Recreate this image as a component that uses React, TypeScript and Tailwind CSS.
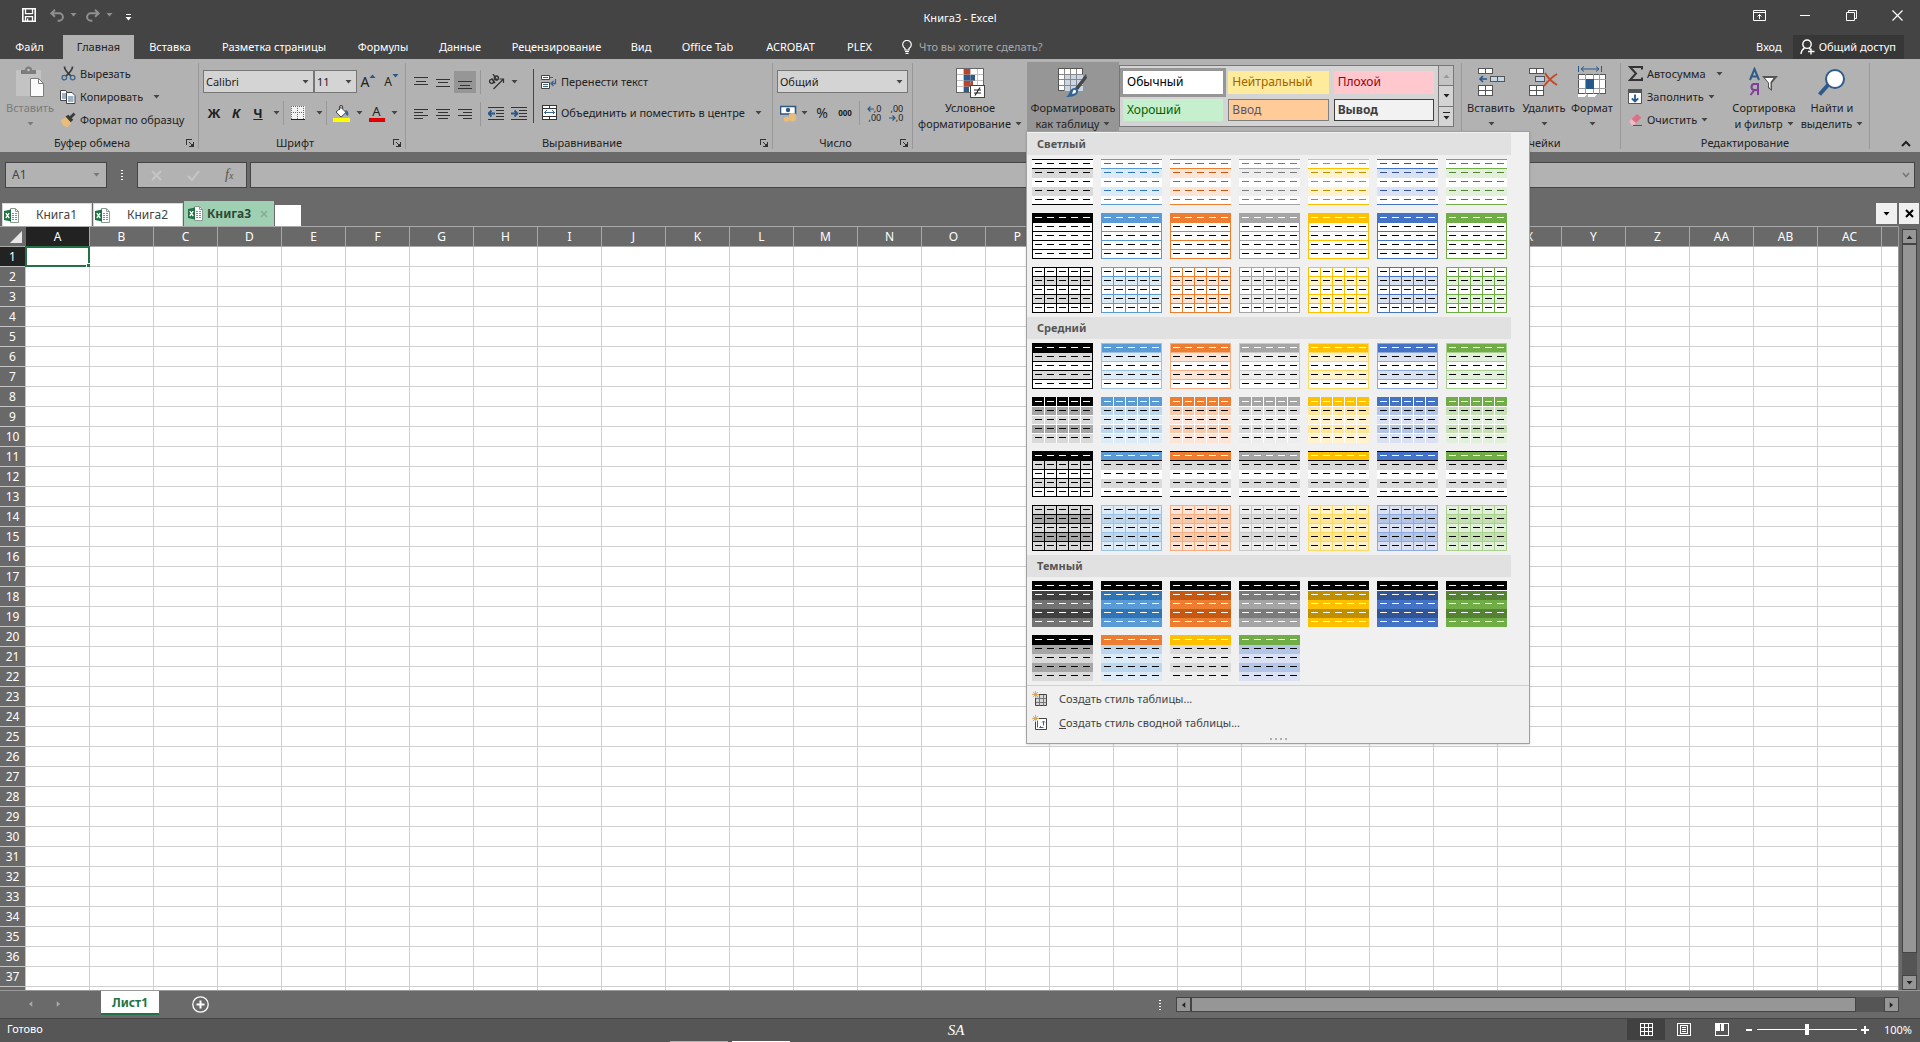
import { useState } from 'react';
import type { ReactNode } from 'react';

const columns = 'A B C D E F G H I J K L M N O P Q R S T U V W X Y Z AA AB AC'.split(' ');
const rows = Array.from({ length: 37 }, (_, i) => i + 1);

const tabs = [
  { name: 'Главная', width: 'w-[71px]' },
  { name: 'Вставка', width: 'w-[72px]' },
  { name: 'Разметка страницы', width: 'w-[136px]' },
  { name: 'Формулы', width: 'w-[82px]' },
  { name: 'Данные', width: 'w-[72px]' },
  { name: 'Рецензирование', width: 'w-[121px]' },
  { name: 'Вид', width: 'w-[48px]' },
  { name: 'Office Tab', width: 'w-[85px]' },
  { name: 'ACROBAT', width: 'w-[81px]' },
  { name: 'PLEX', width: 'w-[57px]' },
];

// main colour, its 20/40/60% tints, dark shade and the ink used for dashes
type Theme = { c: string; t20: string; t40: string; t60: string; dark: string; ink: string };

const themes: Theme[] = [
  { c: '#000000', t20: '#d9d9d9', t40: '#a6a6a6', t60: '#000000', dark: '#404040', ink: '#000000' },
  { c: '#5b9bd5', t20: '#ddebf7', t40: '#bdd7ee', t60: '#9bc2e6', dark: '#2f75b5', ink: '#2f75b5' },
  { c: '#ed7d31', t20: '#fce4d6', t40: '#f8cbad', t60: '#f4b084', dark: '#c65911', ink: '#c65911' },
  { c: '#a5a5a5', t20: '#ededed', t40: '#dbdbdb', t60: '#c9c9c9', dark: '#7b7b7b', ink: '#7b7b7b' },
  { c: '#ffc000', t20: '#fff2cc', t40: '#ffe699', t60: '#ffd966', dark: '#bf8f00', ink: '#bf8f00' },
  { c: '#4472c4', t20: '#d9e1f2', t40: '#b4c6e7', t60: '#8ea9db', dark: '#305496', ink: '#305496' },
  { c: '#70ad47', t20: '#e2efda', t40: '#c6e0b4', t60: '#a9d08e', dark: '#548235', ink: '#548235' },
];

type Tile = {
  head: string;
  odd: string;
  even: string;
  headDash: string;
  dash: string;
  hLines?: number[];
  hColor?: string;
  grid?: string;
  box?: string;
};

const inner = [9, 18, 27, 36];

const light1 = (t: Theme): Tile => ({
  head: '#fff', odd: t.t20, even: '#fff', headDash: t.ink, dash: t.ink, hLines: [0, 9, 45], hColor: t.c,
});
const light2 = (t: Theme): Tile => ({
  head: t.c, odd: '#fff', even: '#fff', headDash: '#fff', dash: '#000', hLines: inner, hColor: t.c, box: t.c,
});
const light3 = (t: Theme): Tile => ({
  head: '#fff', odd: t.t20, even: '#fff', headDash: '#000', dash: '#000', hLines: inner, hColor: t.c, grid: t.c, box: t.c,
});
const medium1 = (t: Theme): Tile => ({
  head: t.c, odd: t.t20, even: '#fff', headDash: '#fff', dash: '#000', hLines: inner, hColor: t.t60, box: t.t60,
});
const medium2 = (t: Theme): Tile => ({
  head: t.c, odd: t.t40, even: t.t20, headDash: '#fff', dash: '#000', hLines: inner, hColor: '#fff', grid: '#fff',
});
const medium3 = (t: Theme, i: number): Tile =>
  i === 0
    ? { head: '#000', odd: t.t20, even: '#fff', headDash: '#fff', dash: '#000', hLines: inner, hColor: '#000', grid: '#000', box: '#000' }
    : { head: t.c, odd: '#d9d9d9', even: '#fff', headDash: '#fff', dash: '#000', hLines: [0, 9, 45], hColor: '#000' };
const medium4 = (t: Theme): Tile => ({
  head: t.t20, odd: t.t40, even: t.t20, headDash: '#000', dash: '#000', hLines: inner, hColor: t.t60, grid: t.t60, box: t.t60,
});
const dark1 = (t: Theme, i: number): Tile => ({
  head: '#000', odd: t.dark, even: i === 0 ? '#737373' : t.c, headDash: '#fff', dash: '#fff', hLines: [9], hColor: '#fff',
});
const dark2 = (head: string, t: Theme): Tile => ({
  head, odd: t.t40, even: t.t20, headDash: '#fff', dash: '#000',
});

const sections: { title: string; rows: Tile[][] }[] = [
  { title: 'Светлый', rows: [themes.map(light1), themes.map(light2), themes.map(light3)] },
  { title: 'Средний', rows: [themes.map(medium1), themes.map(medium2), themes.map(medium3), themes.map(medium4)] },
  {
    title: 'Темный',
    rows: [
      themes.map(dark1),
      [
        dark2('#000000', themes[0]),
        dark2('#ed7d31', themes[1]),
        dark2('#ffc000', themes[3]),
        dark2('#70ad47', themes[5]),
      ],
    ],
  },
];

const TilePreview = ({ tile }: { tile: Tile }) => (
  <svg width="61" height="46" shapeRendering="crispEdges" className="block">
    <rect width="61" height="10" fill={tile.head} />
    {[0, 1, 2, 3].map((i) => (
      <rect key={i} y={10 + i * 9} width="61" height="9" fill={i % 2 ? tile.even : tile.odd} />
    ))}
    {tile.hLines?.map((y) => <rect key={y} y={y} width="61" height="1" fill={tile.hColor} />)}
    {tile.grid &&
      [12, 24, 36, 48].map((x) => <rect key={x} x={x} width="1" height="46" fill={tile.grid} />)}
    {tile.box && <rect x="0.5" y="0.5" width="60" height="45" fill="none" stroke={tile.box} />}
    {[0, 1, 2, 3, 4].map((r) =>
      [0, 1, 2, 3, 4].map((c) => (
        <rect
          key={`${r}-${c}`}
          x={3 + c * 12}
          y={4 + r * 9}
          width="7"
          height="1"
          fill={r === 0 ? tile.headDash : tile.dash}
        />
      )),
    )}
  </svg>
);

const Arrow = ({ className = 'text-[#444]' }: { className?: string }) => (
  <svg width="7" height="4" viewBox="0 0 7 4" className={`shrink-0 ${className}`}>
    <path d="M0.5 0h6L3.5 3.6z" fill="currentColor" />
  </svg>
);

const Launcher = () => (
  <button aria-label="Параметры группы" className="flex h-3 w-3 items-center justify-center">
    <svg width="8" height="8" viewBox="0 0 8 8" fill="none" stroke="#333" shapeRendering="crispEdges">
      <path d="M0.5 6V0.5H6M3 3l3 3M7.5 3v4.5H3" />
      <path d="M7 4v3H4z" fill="#333" stroke="none" />
    </svg>
  </button>
);

const Divider = ({ className = 'h-6 bg-[#989898]' }: { className?: string }) => (
  <span className={`w-px shrink-0 ${className}`} />
);

type GroupProps = { label?: string; width: string; launcher?: boolean; children: ReactNode };

const Group = ({ label, width, launcher, children }: GroupProps) => (
  <section className={`flex shrink-0 flex-col ${width}`}>
    <div className="flex h-[76px] items-start">{children}</div>
    <div className="flex h-4 items-center">
      <span className="flex-1 text-center">{label}</span>
      {launcher && (
        <span className="pr-0.5">
          <Launcher />
        </span>
      )}
    </div>
  </section>
);

const GroupLine = () => <span className="mt-1 h-[86px] w-px shrink-0 bg-[#989898]" />;

type SmallProps = { icon: ReactNode; text: string; arrow?: boolean; gap?: string };

const SmallButton = ({ icon, text, arrow, gap = 'gap-2' }: SmallProps) => (
  <button className={`flex h-[23px] items-center whitespace-nowrap ${gap}`}>
    <span className="flex items-center gap-1">
      <span className="flex h-4 w-4 shrink-0 items-center justify-center">{icon}</span>
      {text}
    </span>
    {arrow && <Arrow />}
  </button>
);

type BigProps = { icon: ReactNode; lines: string[]; width: string; dim?: boolean; active?: boolean };

const BigButton = ({ icon, lines, width, dim, active }: BigProps) => (
  <button
    className={`mt-[3px] flex h-[73px] shrink-0 flex-col items-center pt-1 whitespace-nowrap ${width} ${
      dim ? 'text-[#7b7b7b]' : ''
    } ${active ? 'bg-[#969696]' : ''}`}
  >
    <span className="mb-0.5 flex h-8 items-center justify-center">{icon}</span>
    <span className="h-4 leading-4">{lines[0]}</span>
    <span className="flex h-4 items-center gap-1 leading-4">
      {lines[1]}
      <Arrow className={dim ? 'text-[#7b7b7b]' : 'text-[#444]'} />
    </span>
  </button>
);

const Combo = ({ label, value, width }: { label: string; value: string; width: string }) => (
  <label className={`flex h-[23px] items-center border border-[#777] bg-[#d4d4d4] pr-1 ${width}`}>
    <select aria-label={label} className="w-full min-w-0 flex-1 appearance-none bg-transparent pl-[2px] outline-none">
      <option>{value}</option>
    </select>
    <Arrow />
  </label>
);

type IconButtonProps = { label: string; width: string; children: ReactNode; className?: string };

const IconButton = ({ label, width, children, className = '' }: IconButtonProps) => (
  <button aria-label={label} className={`flex h-[22px] shrink-0 items-center justify-center ${width} ${className}`}>
    {children}
  </button>
);

const Lines = ({ d }: { d: string }) => (
  <svg width="14" height="16" viewBox="0 0 14 16" stroke="#333" shapeRendering="crispEdges">
    <path d={d} />
  </svg>
);

const SaveIcon = () => (
  <svg width="14" height="14" viewBox="0 0 14 14" fill="none" stroke="#fff" strokeWidth="1.6">
    <path d="M0.8 0.8h12.4v12.4H0.8z" />
    <path d="M3.5 1v4.6h7V1" strokeWidth="1.3" />
    <path d="M3.5 13V8.6h7V13M5.6 13v-2.4" strokeWidth="1.3" />
  </svg>
);

const UndoIcon = ({ flip }: { flip?: boolean }) => (
  <svg width="14" height="13" viewBox="0 0 14 13" fill="none" stroke="#8f8f8f" strokeWidth="2" className={flip ? '-scale-x-100' : ''}>
    <path d="M5 0.8L1.3 4.3 5 7.8M1.8 4.3h7.4a3.7 3.7 0 0 1 0 7.4H7.6" />
  </svg>
);

const ExcelIcon = () => (
  <svg width="17" height="17" viewBox="0 0 17 17">
    <path d="M7.5 1.5h5l3 3v11h-8z" fill="#fff" stroke="#8c9a90" />
    <path d="M12.5 1.5v3h3" fill="none" stroke="#8c9a90" />
    <path d="M9 6.5h2M12 6.5h2M9 8.5h2M12 8.5h2M9 10.5h2M12 10.5h2M9 12.5h2M12 12.5h2" stroke="#6f9c81" />
    <path d="M1 4l7-1.5v12L1 13z" fill="#217346" />
    <path d="M2.8 6.2l3.4 4.8M6.2 6.2L2.8 11" stroke="#fff" strokeWidth="1.3" />
  </svg>
);

const PasteIcon = () => (
  <svg width="30" height="32" viewBox="0 0 30 32">
    <path d="M1 4h25v26H1z" fill="#c3c3c3" />
    <path d="M6 8V4h4a3.5 3.5 0 0 1 7 0h4v4z" fill="#7d7d7d" />
    <circle cx="13.5" cy="4" r="1.3" fill="#c3c3c3" />
    <path d="M15.5 12.5h8l5 5v13h-13z" fill="#fbfbfb" stroke="#7d7d7d" />
    <path d="M23.5 12.5v5h5" fill="none" stroke="#7d7d7d" />
  </svg>
);

const CutIcon = () => (
  <svg width="15" height="15" viewBox="0 0 15 15" fill="none">
    <path d="M3.5 0.5c0 4 2.5 5.5 6.5 9.500M11.5 0.5c0 4-2.5 5.5-6.5 9.5" stroke="#3b3b3b" strokeWidth="1.7" />
    <circle cx="3.3" cy="11.6" r="2.3" stroke="#3c6590" strokeWidth="1.3" />
    <circle cx="11.7" cy="11.6" r="2.3" stroke="#3c6590" strokeWidth="1.3" />
  </svg>
);

const CopyIcon = () => (
  <svg width="16" height="14" viewBox="0 0 16 14" fill="#fff" stroke="#444">
    <path d="M0.5 0.5h5l2.5 2.5v7.5h-7.5z" />
    <path d="M2 4h4M2 6h4M2 8h4" stroke="#3c6590" />
    <path d="M6.5 2.5h5.5l3 3v8h-8.5z" />
    <path d="M8 7h5.5M8 9h5.5M8 11h5.5" stroke="#3c6590" />
  </svg>
);

const BrushIcon = () => (
  <svg width="16" height="16" viewBox="0 0 16 16">
    <path d="M1 8l5-3 5 6-3 4c-4 0-6-2-7-7z" fill="#e8bd7c" />
    <path d="M5.500 4.500l3-1.800 4.800 5-2.600 2.500z" fill="#3b3b3b" />
    <path d="M10.5 5.5l4-4" stroke="#3b3b3b" strokeWidth="2.6" />
  </svg>
);

const BordersIcon = () => (
  <svg width="14" height="14" viewBox="0 0 14 14" shapeRendering="crispEdges">
    <path d="M0 0h14v14H0z" fill="#f2f2f2" />
    <path d="M0.5 0v13M6.5 0v13M12.5 0v13M0 0.5h13M0 6.5h13" stroke="#666" strokeDasharray="1 1" />
    <path d="M0 13.5h14" stroke="#222" />
  </svg>
);

const FillIcon = () => (
  <svg width="17" height="17" viewBox="0 0 17 17">
    <path d="M3 7l5-4.500 5 5-5 4.500z" fill="#fff" stroke="#444" />
    <path d="M6.5 5V2a1.6 1.6 0 0 1 3.2 0v2" fill="none" stroke="#444" />
    <path d="M12.500 5c2.500 .5 3.500 3 2.500 6-1-.5-1.800-1-2.500-2z" fill="#3c6590" />
    <path d="M0 13h17v4H0z" fill="#ff0" />
  </svg>
);

const OrientationIcon = () => (
  <svg width="17" height="16" viewBox="0 0 17 16" fill="none" stroke="#333">
    <circle cx="3.6" cy="7.4" r="2" strokeWidth="1.4" />
    <path d="M3.600 4.500l3.400 4.500" strokeWidth="1.4" />
    <circle cx="8.4" cy="4" r="2" strokeWidth="1.4" />
    <path d="M5 0l4 6.5" strokeWidth="1.4" />
    <path d="M5.5 15L15 5.5M15.500 9V5H11.5" strokeWidth="1.2" />
  </svg>
);

const IndentIcon = ({ right }: { right?: boolean }) => (
  <svg width="16" height="14" viewBox="0 0 16 14" fill="none">
    <path d="M0 0.5h16M8 3.5h8M8 6.5h8M8 9.5h8M0 12.5h16" stroke="#333" shapeRendering="crispEdges" />
    <path d={right ? 'M0 6.5h6M3.5 3.5l3 3-3 3' : 'M7 6.5H1M3.5 3.5l-3 3 3 3'} stroke="#27588c" strokeWidth="1.8" />
  </svg>
);

const WrapIcon = () => (
  <svg width="16" height="16" viewBox="0 0 16 16" fill="none">
    <path d="M0.5 1.5h8v4h-8zM0.5 8.5h8v6h-8z" fill="#fff" stroke="#444" />
    <path d="M2 3.5h5M2 10.5h5M2 12.5h5M9 3.5h3" stroke="#3c6590" />
    <path d="M14.5 5v4.5h-4M12.5 7l-2.5 2.5 2.5 2.5" stroke="#3c6590" strokeWidth="1.3" />
  </svg>
);

const MergeIcon = () => (
  <svg width="15" height="15" viewBox="0 0 15 15" fill="none" shapeRendering="crispEdges">
    <path d="M0.5 0.5h14v14h-14z" fill="#fff" stroke="#333" />
    <path d="M0 3.5h15M0 11.5h15M7.5 0v3M7.5 12v3" stroke="#333" />
    <path d="M2 7.5h11M4.5 5.5l-2 2 2 2M10.5 5.5l2 2-2 2" stroke="#3c6590" />
  </svg>
);

const CurrencyIcon = () => (
  <svg width="17" height="17" viewBox="0 0 17 17">
    <path d="M0.500 1.500h15v7.500h-15z" fill="#fff" stroke="#31567f" strokeWidth="1.6" />
    <circle cx="8" cy="5" r="2.2" fill="#31567f" />
    <path d="M9 9.5c0-2 7-2 7 0v5c0 2.5-7 2.5-7 0z" fill="#e8bd7c" />
    <path d="M4 13c0-1.500 5-1.500 5 0v2.500c0 1.500-5 1.500-5 0z" fill="#e8bd7c" />
  </svg>
);

const DecimalArrow = ({ right }: { right?: boolean }) => (
  <svg width="7" height="6" viewBox="0 0 7 6" fill="none" stroke="#27588c" className={right ? '-scale-x-100' : ''}>
    <path d="M3.5 0.5L1 3l2.5 2.5M1 3h6" strokeWidth="1.2" />
  </svg>
);

const DecimalButton = ({ less }: { less?: boolean }) => (
  <span className="flex flex-col text-[9px] leading-[9px]">
    <span className="flex items-center justify-end">
      {!less && <DecimalArrow />}
      {less ? ',00' : ',0'}
    </span>
    <span className="flex items-center justify-end">
      {less && <DecimalArrow right />}
      {less ? ',0' : ',00'}
    </span>
  </span>
);

const ConditionalIcon = () => (
  <svg width="29" height="31" viewBox="0 0 29 31" shapeRendering="crispEdges">
    <path d="M0.5 1.5h27v24h-27z" fill="#fff" stroke="#666" />
    <path d="M8 2h6v6H8zM8 14h9v6H8z" fill="#b9452f" />
    <path d="M8 8h11v6H8zM8 20h5v5H8z" fill="#2f5b8c" />
    <path d="M7.5 2v23M14.5 2v23M21.5 2v23M1 7.5h26M1 13.5h26M1 19.5h26" stroke="#9a9a9a" strokeOpacity="0.6" fill="none" />
    <path d="M14.5 18.5h14v12h-14z" fill="#fff" stroke="#444" />
    <path d="M18 23h7M18 26h7M24 20.5l-5 8" stroke="#222" strokeWidth="1.2" shapeRendering="auto" />
  </svg>
);

const FormatTableIcon = () => (
  <svg width="30" height="32" viewBox="0 0 30 32">
    <g shapeRendering="crispEdges">
      <path d="M0.5 2.5h24v22h-24z" fill="#fff" stroke="#555" />
      <path d="M7 8h18v17H7z" fill="#c9d6e6" />
      <path d="M6.5 3v22M12.5 3v22M18.5 3v22M1 8.5h24M1 13.5h24M1 19.5h24" stroke="#888" fill="none" />
    </g>
    <path d="M28 8l1 4-9 12-3-2z" fill="#484848" />
    <path d="M16 22c3 0 4.5 2 4 4-1 4-6 5-12 5 4-2 3-8 8-9z" fill="#2f6497" />
    <path d="M15.500 24c1.500-.8 3 .5 2.500 2-.8 1.500-2.500 2-4 1.500z" fill="#fff" />
  </svg>
);

const InsertCellsIcon = () => (
  <svg width="27" height="30" viewBox="0 0 27 30" fill="#fff" stroke="#555" shapeRendering="crispEdges">
    <path d="M0.5 1.5h14v5h-14zM7.5 1.5v5M0.5 18.5h14v10h-14zM0.5 23.5h14M7.5 18.5v10" />
    <path d="M12.5 9.5h14v5h-14zM19.5 9.5v5" fill="#c5d5e8" />
    <path d="M9 12H2M5 9l-3 3 3 3" fill="none" stroke="#27588c" strokeWidth="1.6" shapeRendering="auto" />
  </svg>
);

const DeleteCellsIcon = () => (
  <svg width="30" height="30" viewBox="0 0 30 30" fill="#fff" stroke="#555">
    <g shapeRendering="crispEdges">
      <path d="M0.5 1.5h14v5h-14zM7.5 1.5v5M0.5 18.5h14v10h-14zM0.5 23.5h14M7.5 18.5v10" />
      <path d="M6.5 9.5h9v5h-9z" fill="#c5d5e8" />
    </g>
    <path d="M16 6c3 5 7 9 12 12M28 7c-5 3-9 7-13 12" fill="none" stroke="#c24a2c" strokeWidth="2" />
  </svg>
);

const FormatCellsIcon = () => (
  <svg width="29" height="32" viewBox="0 0 29 32" shapeRendering="crispEdges">
    <path d="M0.5 0v6M23.5 0v6" stroke="#27588c" />
    <path d="M3 3h18M6 0.5L3 3l3 2.5M18 0.5l3 2.5-3 2.5" stroke="#27588c" fill="none" shapeRendering="auto" />
    <path d="M0.5 8.5h27v19h-27z" fill="#fff" stroke="#555" />
    <path d="M7.5 8v20M15.5 8v20M21.5 8v20M0 13.5h28M0 22.5h28" stroke="#999" fill="none" />
    <path d="M8 13h8v10H8z" fill="#27588c" />
    <path d="M0 28h9l-3 3H0zM10 28h9l-3 3h-6z" fill="#fff" />
  </svg>
);

const SumIcon = () => (
  <svg width="15" height="15" viewBox="0 0 15 15" fill="none" stroke="#333" strokeWidth="2">
    <path d="M14 3.5V1H2l6 6.5L2 14h12v-2.5" />
  </svg>
);

const FillDownIcon = () => (
  <svg width="14" height="15" viewBox="0 0 14 15" fill="none">
    <path d="M0.5 0.5h13v14H0.5z" fill="#fff" stroke="#555" />
    <path d="M0 0h14v4H0z" fill="#555" />
    <path d="M7 5.5v7M3.8 9.3L7 12.5l3.2-3.2" stroke="#27588c" strokeWidth="1.8" />
  </svg>
);

const EraserIcon = () => (
  <svg width="15" height="14" viewBox="0 0 15 14">
    <path d="M1 8.5L9 1l4.5 3.5L6 12z" fill="#dd6f86" />
    <path d="M1 8.5L3.5 6 8 10l-2 2H3.5z" fill="#f0b9c4" />
    <path d="M5 12.5h9" stroke="#555" />
  </svg>
);

const SortIcon = () => (
  <svg width="30" height="30" viewBox="0 0 30 30" fill="none">
    <path d="M1 13L5.5 2 10 13M2.5 9.5h6" stroke="#2f5b8c" strokeWidth="2" />
    <path d="M9 28V17H5.5a3 3 0 0 0 0 6H9M5.5 23L1.5 28" stroke="#7f3f98" strokeWidth="2" />
    <path d="M13 9h16l-6 7v8l-4-3v-5z" fill="#555" />
    <path d="M16 11l4 5v4l1.5 2v-7l3-4z" fill="#fff" />
  </svg>
);

const FindIcon = () => (
  <svg width="28" height="29" viewBox="0 0 28 29" fill="none" stroke="#2f5b8c">
    <path d="M10 17l-8.500 9.500" strokeWidth="4" />
    <circle cx="17" cy="11" r="9" fill="#fff" strokeWidth="2" />
  </svg>
);

const NewStyleIcon = ({ pivot }: { pivot?: boolean }) => (
  <svg width="16" height="16" viewBox="0 0 16 16" fill="none">
    <path d="M3.5 3.5h11v11h-11z" fill={pivot ? '#fff' : '#d8d8d8'} stroke="#444" />
    {pivot ? (
      <path d="M5.5 5.5v7M7.5 12.5h4M11.5 6v4.5M10 7.500l1.500-1.500 1.500 1.500M9 11l-1.500 1.500" stroke="#3c6590" />
    ) : (
      <path d="M7.5 4v10.5M11.5 4v10.5M4 7.5h10.5M4 11.5h10.5" stroke="#777" />
    )}
    <path d="M3.5 0v7M0 3.5h7M1 1l5 5M6 1L1 6" stroke="#dba95c" />
  </svg>
);

const TitleBar = () => (
  <header className="flex h-[35px] shrink-0 items-start text-white">
    <div className="flex h-[30px] flex-1 items-center">
      <button aria-label="Сохранить" className="ml-[22px]">
        <SaveIcon />
      </button>
      <button aria-label="Отменить" className="ml-[14px] flex items-center gap-[6px]">
        <UndoIcon />
        <Arrow className="text-[#8f8f8f]" />
      </button>
      <button aria-label="Вернуть" className="ml-[9px] flex items-center gap-[6px]">
        <UndoIcon flip />
        <Arrow className="text-[#8f8f8f]" />
      </button>
      <button aria-label="Настройка панели быстрого доступа" className="mt-[5px] ml-3">
        <svg width="7" height="7" viewBox="0 0 7 7" fill="#fff">
          <path d="M1 0h5v1H1zM0.5 3h6L3.5 6.5z" />
        </svg>
      </button>
    </div>
    <h1 className="pt-[10px] text-[11px] leading-4">Книга3 - Excel</h1>
    <div className="flex h-[30px] flex-1 justify-end">
      <button aria-label="Параметры отображения ленты" className="flex w-[46px] items-center justify-center">
        <svg width="13" height="11" viewBox="0 0 13 11" fill="none" stroke="#fff">
          <path d="M0.5 0.5h12v10H0.5zM0.5 2.5h12M6.5 9V4.5M4.5 6.5l2-2 2 2" />
        </svg>
      </button>
      <button aria-label="Свернуть" className="flex w-[46px] items-center justify-center">
        <span className="h-px w-[10px] bg-white" />
      </button>
      <button aria-label="Восстановить" className="flex w-[46px] items-center justify-center">
        <svg width="11" height="11" viewBox="0 0 11 11" fill="none" stroke="#fff">
          <path d="M0.5 2.5h8v8h-8zM2.5 2.5v-2h8v8h-2" />
        </svg>
      </button>
      <button aria-label="Закрыть" className="flex w-[46px] items-center justify-center">
        <svg width="11" height="11" viewBox="0 0 11 11" stroke="#fff" strokeWidth="1.2">
          <path d="M0.5 0.5l10 10M10.5 0.5l-10 10" />
        </svg>
      </button>
    </div>
  </header>
);

const TabBar = () => {
  const [active, setActive] = useState('Главная');

  return (
    <nav className="flex h-6 shrink-0 text-white">
      <button className="w-[63px] pr-1">Файл</button>
      {tabs.map((tab) => (
        <button
          key={tab.name}
          className={`shrink-0 whitespace-nowrap ${tab.width} ${tab.name === active ? 'bg-[#b2b2b2] text-[#222]' : ''}`}
          onClick={() => setActive(tab.name)}
        >
          {tab.name}
        </button>
      ))}
      <label className="ml-[14px] flex items-center gap-[7px]">
        <svg width="10" height="14" viewBox="0 0 10 14" fill="none" stroke="#fff" strokeWidth="1.2">
          <path d="M3 10V8.5C1.5 7.5 0.7 6.2 0.7 4.7a4.3 4.3 0 0 1 8.6 0c0 1.5-.8 2.8-2.3 3.8V10zM3 11.5h4M3.5 13.3h3" />
        </svg>
        <input
          aria-label="Помощник"
          placeholder="Что вы хотите сделать?"
          className="w-40 bg-transparent outline-none placeholder:text-[#a8a8a8]"
        />
      </label>
      <div className="flex flex-1 justify-end pr-4">
        <button className="px-[11px]">Вход</button>
        <button className="flex items-center gap-1 bg-[#373737] pr-2 pl-[7px]">
          <svg width="15" height="16" viewBox="0 0 15 16" fill="none" stroke="#fff" strokeWidth="1.4">
            <circle cx="7" cy="5.2" r="4.2" />
            <path d="M1 15c.3-2.8 1.5-4.7 3.5-5.8M9 9l1.500 1.500M11 9.5v6M8 12.5h6.5" />
          </svg>
          Общий доступ
        </button>
      </div>
    </nav>
  );
};

const TableStyles = () => (
  <div className="absolute top-[72px] left-[-1px] z-20 w-[504px] border border-[#a0a0a0] bg-[#f0f0f0] pt-px text-[#444] shadow-sm">
    {sections.map((section) => (
      <div key={section.title}>
        <h2 className="mr-[18px] h-[22px] bg-[#e1e1e1] pl-[10px] text-[11px] leading-[21px] font-bold text-[#555]">
          {section.title}
        </h2>
        <div className="flex flex-col gap-2 py-1 pl-[5px]">
          {section.rows.map((row, i) => (
            <div key={i} className="flex gap-2">
              {row.map((tile, j) => (
                <button key={j} aria-label={`${section.title} стиль ${i * 7 + j + 1}`}>
                  <TilePreview tile={tile} />
                </button>
              ))}
            </div>
          ))}
        </div>
      </div>
    ))}
    <div className="border-t border-[#d0d0d0] px-[5px] pt-px">
      <button className="flex h-6 w-full items-center gap-[11px]">
        <NewStyleIcon />
        <span>
          Созд<u>а</u>ть стиль таблицы...
        </span>
      </button>
      <button className="flex h-6 w-full items-center gap-[11px]">
        <NewStyleIcon pivot />
        <span>
          <u>С</u>оздать стиль сводной таблицы...
        </span>
      </button>
    </div>
    <div className="flex h-2 items-center justify-center gap-[3px]">
      {[0, 1, 2, 3].map((i) => (
        <span key={i} className="h-0.5 w-0.5 bg-[#b0b0b0]" />
      ))}
    </div>
  </div>
);

const CellStyles = () => (
  <div className="mt-[6px] flex h-[62px] w-[335px] shrink-0 border border-[#777] bg-[#d4d4d4] text-xs">
    <div className="grid flex-1 grid-cols-3 grid-rows-2 gap-x-[5px] gap-y-[5px] py-[5px] pr-1 pl-[3px] text-left">
      <button className="bg-white pl-1 text-left text-black outline-3 outline-[#969696]">Обычный</button>
      <button className="bg-[#ffeb9c] pl-1 text-left text-[#9c6500]">Нейтральный</button>
      <button className="bg-[#ffc7ce] pl-1 text-left text-[#9c0006]">Плохой</button>
      <button className="bg-[#c6efce] pl-1 text-left text-[#006100]">Хороший</button>
      <button className="border border-[#7f7f7f] bg-[#ffcc99] pl-[3px] text-left text-[#5c5470]">Ввод</button>
      <button className="border border-[#3f3f3f] bg-[#f2f2f2] pl-[3px] text-left font-bold text-[#3f3f3f]">Вывод</button>
    </div>
    <div className="flex w-[15px] flex-col border-l border-[#777]">
      <button aria-label="Вверх" className="flex flex-1 items-center justify-center bg-[#c4c4c4]">
        <Arrow className="rotate-180 text-[#999]" />
      </button>
      <button aria-label="Вниз" className="flex flex-1 items-center justify-center border-y border-[#777]">
        <Arrow className="text-[#222]" />
      </button>
      <button aria-label="Все стили" className="flex flex-1 flex-col items-center justify-center gap-[3px]">
        <span className="h-px w-[7px] bg-[#222]" />
        <Arrow className="text-[#222]" />
      </button>
    </div>
  </div>
);

const Ribbon = () => (
  <div className="flex h-[93px] shrink-0 bg-[#b2b2b2] text-[#222]">
    <Group label="Буфер обмена" width="w-[198px]" launcher>
      <BigButton icon={<PasteIcon />} lines={['Вставить', '']} width="w-[60px]" dim />
      <div className="flex flex-col items-start pt-[3px]">
        <SmallButton icon={<CutIcon />} text="Вырезать" />
        <SmallButton icon={<CopyIcon />} text="Копировать" arrow gap="gap-[10px]" />
        <SmallButton icon={<BrushIcon />} text="Формат по образцу" />
      </div>
    </Group>
    <GroupLine />
    <Group label="Шрифт" width="w-[206px]" launcher>
      <div className="flex flex-col gap-2 pt-[11px] pl-1">
        <div className="flex items-center">
          <Combo label="Шрифт" value="Calibri" width="w-[111px]" />
          <Combo label="Размер шрифта" value="11" width="w-[43px]" />
          <IconButton label="Увеличить размер" width="w-[23px]" className="text-sm">
            A<Arrow className="mb-3 rotate-180 text-[#27588c]" />
          </IconButton>
          <IconButton label="Уменьшить размер" width="w-[23px]" className="text-xs">
            A<Arrow className="mb-3 text-[#27588c]" />
          </IconButton>
        </div>
        <div className="flex items-center text-[13px] font-bold">
          <IconButton label="Полужирный" width="w-[22px]">Ж</IconButton>
          <IconButton label="Курсив" width="w-[22px]" className="italic">К</IconButton>
          <IconButton label="Подчеркнутый" width="w-[22px]" className="underline">Ч</IconButton>
          <IconButton label="Варианты подчеркивания" width="w-[14px]"><Arrow /></IconButton>
          <Divider />
          <IconButton label="Границы" width="w-[28px]"><BordersIcon /></IconButton>
          <IconButton label="Виды границ" width="w-[14px]"><Arrow /></IconButton>
          <Divider />
          <IconButton label="Цвет заливки" width="w-[29px]"><FillIcon /></IconButton>
          <IconButton label="Выбор заливки" width="w-[6px]"><Arrow /></IconButton>
          <IconButton label="Цвет текста" width="w-[29px]" className="font-normal">
            <span className="w-4 border-b-4 border-[#e00000] text-center text-[13px] leading-[13px]">A</span>
          </IconButton>
          <IconButton label="Выбор цвета текста" width="w-[6px]"><Arrow /></IconButton>
        </div>
      </div>
    </Group>
    <GroupLine />
    <Group label="Выравнивание" width="w-[366px]" launcher>
      <div className="flex flex-col gap-2 pt-[11px] pl-1">
        <div className="flex items-center">
          <IconButton label="По верхнему краю" width="w-[22px]"><Lines d="M0 3.5h14M2 7.5h10M0 10.5h14" /></IconButton>
          <IconButton label="По середине" width="w-[22px]"><Lines d="M0 5.5h14M2 8.5h10M0 12.5h14" /></IconButton>
          <IconButton label="По нижнему краю" width="w-[22px]" className="bg-[#969696]">
            <Lines d="M0 7.5h14M2 11.5h10M0 14.5h14" />
          </IconButton>
          <span className="w-1" />
          <Divider />
          <IconButton label="Ориентация" width="w-[30px]"><OrientationIcon /></IconButton>
          <Arrow />
        </div>
        <div className="flex items-center">
          <IconButton label="По левому краю" width="w-[22px]"><Lines d="M0 3.5h14M0 6.5h9M0 9.5h14M0 12.5h9" /></IconButton>
          <IconButton label="По центру" width="w-[22px]"><Lines d="M0 3.5h14M2 6.5h10M0 9.5h14M2 12.5h10" /></IconButton>
          <IconButton label="По правому краю" width="w-[22px]"><Lines d="M0 3.5h14M5 6.5h9M0 9.5h14M5 12.5h9" /></IconButton>
          <span className="w-1" />
          <Divider />
          <IconButton label="Уменьшить отступ" width="w-[30px]"><IndentIcon /></IconButton>
          <IconButton label="Увеличить отступ" width="w-[16px]"><IndentIcon right /></IconButton>
        </div>
      </div>
      <Divider className="mt-[10px] ml-[6px] h-[54px] bg-[#444]" />
      <div className="flex flex-col items-start gap-2 pt-[11px] pl-[7px]">
        <SmallButton icon={<WrapIcon />} text="Перенести текст" />
        <SmallButton icon={<MergeIcon />} text="Объединить и поместить в центре" arrow gap="gap-[10px]" />
      </div>
    </Group>
    <GroupLine />
    <Group label="Число" width="w-[139px]" launcher>
      <div className="flex flex-col gap-2 pt-[11px] pl-1">
        <Combo label="Числовой формат" value="Общий" width="w-[131px]" />
        <div className="flex items-center">
          <IconButton label="Финансовый формат" width="w-[23px]"><CurrencyIcon /></IconButton>
          <IconButton label="Валюты" width="w-[9px]"><Arrow /></IconButton>
          <IconButton label="Процентный формат" width="w-[26px]" className="text-sm">%</IconButton>
          <IconButton label="Формат с разделителями" width="w-[20px]" className="text-[8px] font-bold">000</IconButton>
          <Divider className="ml-1 h-6 bg-[#989898]" />
          <IconButton label="Увеличить разрядность" width="w-[28px]"><DecimalButton /></IconButton>
          <IconButton label="Уменьшить разрядность" width="w-[16px]"><DecimalButton less /></IconButton>
        </div>
      </div>
    </Group>
    <GroupLine />
    <Group width="w-[548px]">
      <BigButton icon={<ConditionalIcon />} lines={['Условное', 'форматирование']} width="w-[114px]" />
      <div className="relative">
        <BigButton icon={<FormatTableIcon />} lines={['Форматировать', 'как таблицу']} width="w-[92px]" active />
        <TableStyles />
      </div>
      <CellStyles />
    </Group>
    <GroupLine />
    <Group label="Ячейки" width="w-[158px]">
      <BigButton icon={<InsertCellsIcon />} lines={['Вставить', '']} width="w-[58px]" />
      <BigButton icon={<DeleteCellsIcon />} lines={['Удалить', '']} width="w-[48px]" />
      <BigButton icon={<FormatCellsIcon />} lines={['Формат', '']} width="w-[48px]" />
    </Group>
    <GroupLine />
    <Group label="Редактирование" width="w-[248px]">
      <div className="flex w-[106px] flex-col items-start pt-[3px] pl-[6px]">
        <SmallButton icon={<SumIcon />} text="Автосумма" arrow gap="gap-[10px]" />
        <SmallButton icon={<FillDownIcon />} text="Заполнить" arrow gap="gap-1" />
        <SmallButton icon={<EraserIcon />} text="Очистить" arrow gap="gap-1" />
      </div>
      <BigButton icon={<SortIcon />} lines={['Сортировка', 'и фильтр']} width="w-[74px]" />
      <BigButton icon={<FindIcon />} lines={['Найти и', 'выделить']} width="w-[62px]" />
    </Group>
    <GroupLine />
    <div className="flex flex-1 items-end justify-end pr-[9px] pb-[5px]">
      <button aria-label="Свернуть ленту">
        <svg width="10" height="7" viewBox="0 0 10 7" fill="none" stroke="#222" strokeWidth="2">
          <path d="M1 6l4-4 4 4" />
        </svg>
      </button>
    </div>
  </div>
);

const FormulaBar = () => (
  <div className="flex h-[49px] shrink-0 items-start px-[5px] pt-[10px]">
    <label className="flex h-[26px] w-[102px] items-center border border-[#444] bg-[#b2b2b2] pr-[6px]">
      <input
        aria-label="Имя ячейки"
        defaultValue="A1"
        className="min-w-0 flex-1 bg-transparent pl-[6px] text-xs text-[#444] outline-none"
      />
      <Arrow className="text-[#777]" />
    </label>
    <span className="flex h-[26px] w-[30px] flex-col items-center justify-center gap-[2px]">
      {[0, 1, 2, 3].map((i) => (
        <span key={i} className="h-px w-0.5 bg-white" />
      ))}
    </span>
    <div className="flex h-[26px] w-[110px] items-center justify-around border border-[#444] bg-[#b2b2b2]">
      <button aria-label="Отмена">
        <svg width="11" height="11" viewBox="0 0 11 11" stroke="#c6c6c6" strokeWidth="2">
          <path d="M1 1l9 9M10 1l-9 9" />
        </svg>
      </button>
      <button aria-label="Ввод">
        <svg width="13" height="11" viewBox="0 0 13 11" fill="none" stroke="#c6c6c6" strokeWidth="2">
          <path d="M1 6l4 4 7-9" />
        </svg>
      </button>
      <button aria-label="Вставить функцию" className="font-['Liberation_Serif',serif] text-sm text-[#555] italic">
        f<span className="text-[10px]">x</span>
      </button>
    </div>
    <label className="ml-[3px] flex h-[26px] flex-1 items-center border border-[#444] bg-[#b2b2b2] pr-1">
      <input aria-label="Строка формул" className="min-w-0 flex-1 bg-transparent px-1 outline-none" />
      <svg width="8" height="6" viewBox="0 0 8 6" fill="none" stroke="#777" strokeWidth="1.6">
        <path d="M1 1l3 3.5L7 1" />
      </svg>
    </label>
  </div>
);

const DocumentTabs = () => (
  <div className="flex h-[25px] shrink-0 items-end gap-px pr-px pl-[2px] text-xs text-[#444]">
    <button className="flex h-[23px] w-[90px] items-center gap-4 border border-b-0 border-[#d8d8d8] bg-white">
      <ExcelIcon />
      Книга1
    </button>
    <button className="flex h-[23px] w-[90px] items-center gap-4 border border-b-0 border-[#d8d8d8] bg-white">
      <ExcelIcon />
      Книга2
    </button>
    <button className="flex h-[25px] w-[90px] items-center gap-[3px] bg-[#9fd0b3] pl-[3px] font-bold text-[#2b4a39]">
      <ExcelIcon />
      Книга3
      <svg width="8" height="8" viewBox="0 0 8 8" stroke="#8aa898" strokeWidth="1.5" className="ml-[6px]">
        <path d="M1 1l6 6M7 1L1 7" />
      </svg>
    </button>
    <button aria-label="Новая книга" className="h-[21px] w-[26px] bg-white" />
    <div className="flex h-[25px] flex-1 items-start justify-end gap-[2px] pt-[2px]">
      <button aria-label="Список книг" className="flex h-[21px] w-[21px] items-center justify-center bg-[#f0f0f0]">
        <Arrow className="text-black" />
      </button>
      <button aria-label="Закрыть книгу" className="flex h-[21px] w-[20px] items-center justify-center bg-[#f0f0f0]">
        <svg width="9" height="9" viewBox="0 0 9 9" stroke="#000" strokeWidth="2">
          <path d="M1 1l7 7M8 1L1 8" />
        </svg>
      </button>
    </div>
  </div>
);

const Sheet = () => (
  <div className="min-w-0 flex-1 overflow-hidden border-r border-[#999] bg-white">
    <table className="w-[1946px] table-fixed border-separate border-spacing-0 text-xs leading-4">
      <colgroup>
        <col className="w-[26px]" />
        {columns.map((c) => (
          <col key={c} className="w-[64px]" />
        ))}
        <col className="w-[64px]" />
      </colgroup>
      <thead>
        <tr className="h-[21px] bg-[#696969] text-white">
          <td className="border-t border-b border-[#a8a8a8] p-0">
            <button aria-label="Выделить все" className="block">
              <svg width="24" height="17" viewBox="0 0 24 17">
                <path d="M22 3v12H10z" fill="#e8e8e8" />
              </svg>
            </button>
          </td>
          {columns.map((c) => (
            <th
              key={c}
              className={`border-t border-r border-b border-[#a8a8a8] p-0 font-normal ${c === 'A' ? 'bg-[#222]' : ''}`}
            >
              {c}
            </th>
          ))}
          <td className="border-t border-b border-[#a8a8a8] p-0" />
        </tr>
      </thead>
      <tbody>
        {rows.map((r) => (
          <tr key={r} className="h-5">
            <th
              className={`border-r border-b border-[#c4c4c4] px-0 pt-px pb-0 font-normal text-white ${
                r === 1 ? 'bg-[#222]' : 'bg-[#696969]'
              }`}
            >
              {r}
            </th>
            {columns.map((c) => (
              <td key={c} className="relative border-r border-b border-[#d0d0d0] p-0">
                {r === 1 && c === 'A' && (
                  <>
                    <span className="absolute -inset-px border-2 border-[#217346]" />
                    <span className="absolute -right-[2px] -bottom-[2px] h-[5px] w-[5px] border border-white bg-[#217346]" />
                  </>
                )}
              </td>
            ))}
            <td className="border-b border-[#d0d0d0] p-0" />
          </tr>
        ))}
        <tr className="h-5">
          <td className="border-r border-[#c4c4c4] bg-[#696969] p-0" />
          {columns.map((c) => (
            <td key={c} className="border-r border-[#d0d0d0] p-0" />
          ))}
          <td className="p-0" />
        </tr>
      </tbody>
    </table>
  </div>
);

const ScrollButton = ({ label, turn }: { label: string; turn: string }) => (
  <button
    aria-label={label}
    className="flex h-[15px] w-[15px] shrink-0 items-center justify-center border border-[#444] bg-[#969696]"
  >
    <Arrow className={`text-[#222] ${turn}`} />
  </button>
);

const VerticalScroll = () => (
  <div className="flex w-[21px] shrink-0 flex-col items-center pt-[3px]">
    <ScrollButton label="Прокрутить вверх" turn="rotate-180" />
    <div className="w-[15px] flex-1 bg-[#555]">
      <div className="h-[97%] border border-[#444] bg-[#969696]" />
    </div>
    <ScrollButton label="Прокрутить вниз" turn="" />
  </div>
);

const SheetBar = () => (
  <div className="flex h-7 shrink-0 border-t border-[#999] text-xs">
    <div className="flex w-[101px] items-center gap-[21px] pb-px pl-[27px]">
      <button aria-label="Предыдущий лист"><Arrow className="rotate-90 text-[#aaa]" /></button>
      <button aria-label="Следующий лист"><Arrow className="-rotate-90 text-[#aaa]" /></button>
    </div>
    <button className="h-6 w-[58px] border-b-2 border-[#217346] bg-white pt-px font-bold text-[#217346]">Лист1</button>
    <button aria-label="Новый лист" className="ml-[33px] h-[26px]">
      <svg width="17" height="17" viewBox="0 0 17 17" fill="none" stroke="#fff">
        <circle cx="8.5" cy="8.5" r="7.7" strokeWidth="1.3" />
        <path d="M8.5 4.5v8M4.5 8.5h8" strokeWidth="2" />
      </svg>
    </button>
    <div className="flex flex-1 items-center justify-end pr-[21px]">
      <span className="mr-[15px] flex flex-col gap-[2px]">
        {[0, 1, 2, 3].map((i) => (
          <span key={i} className="h-px w-0.5 bg-white" />
        ))}
      </span>
      <ScrollButton label="Прокрутить влево" turn="rotate-90" />
      <div className="h-[15px] w-[41%] bg-[#555]">
        <div className="h-full w-[96%] border border-[#444] bg-[#969696]" />
      </div>
      <ScrollButton label="Прокрутить вправо" turn="-rotate-90" />
    </div>
  </div>
);

const StatusBar = () => {
  const [zoom, setZoom] = useState(50);

  return (
    <footer className="flex h-6 shrink-0 items-stretch border-t border-[#444] bg-[#565656] text-white">
      <div className="flex flex-1 items-end justify-between">
        <span className="pb-[5px] pl-[7px]">Готово</span>
        <span className="flex gap-1 pr-[158px]">
          <span className="h-px w-[58px] bg-[#b2b2b2]" />
          <span className="h-px w-[58px] bg-white" />
        </span>
      </div>
      <span className="pt-px font-['Liberation_Serif',serif] text-[15px] leading-5 italic">SA</span>
      <div className="flex flex-1 items-center justify-end pr-2 pb-[2px]">
        <button aria-label="Обычный" className="flex h-[21px] w-[38px] items-center justify-center bg-[#414141]">
          <svg width="13" height="13" viewBox="0 0 13 13" fill="none" stroke="#fff" shapeRendering="crispEdges">
            <path d="M0.5 0.5h12v12h-12zM4.5 0v13M8.5 0v13M0 4.5h13M0 8.5h13" />
          </svg>
        </button>
        <button aria-label="Разметка страницы" className="flex h-[21px] w-[38px] items-center justify-center">
          <svg width="14" height="13" viewBox="0 0 14 13" fill="none" stroke="#fff" shapeRendering="crispEdges">
            <path d="M0.5 0.5h13v12h-13zM3.5 2.5h7v8h-7zM5 4.5h4M5 6.5h4M5 8.5h4" />
          </svg>
        </button>
        <button aria-label="Страничный" className="flex h-[21px] w-[38px] items-center justify-center">
          <svg width="14" height="13" viewBox="0 0 14 13" fill="none" stroke="#fff" shapeRendering="crispEdges">
            <path d="M0.5 0.5h13v12h-13z" />
            <path d="M1 1h4v7H1zM6 1h3v7H6z" fill="#fff" stroke="none" />
          </svg>
        </button>
        <button aria-label="Уменьшить" className="flex h-4 w-4 items-center justify-center">
          <span className="h-0.5 w-[6px] bg-white" />
        </button>
        <input
          type="range"
          aria-label="Масштаб"
          value={zoom}
          onChange={(e) => setZoom(Number(e.target.value))}
          className="h-4 w-[100px] appearance-none bg-transparent [&::-webkit-slider-runnable-track]:h-px [&::-webkit-slider-runnable-track]:bg-white [&::-webkit-slider-thumb]:-mt-[5px] [&::-webkit-slider-thumb]:h-[11px] [&::-webkit-slider-thumb]:w-1 [&::-webkit-slider-thumb]:appearance-none [&::-webkit-slider-thumb]:bg-white"
        />
        <button aria-label="Увеличить" className="flex h-4 w-4 items-center justify-center">
          <svg width="8" height="8" viewBox="0 0 8 8" stroke="#fff" strokeWidth="2">
            <path d="M4 0v8M0 4h8" />
          </svg>
        </button>
        <span className="w-[39px] text-right">100%</span>
      </div>
    </footer>
  );
};

const App = () => (
  <div className="flex h-screen flex-col overflow-hidden bg-[#444] font-['Noto_Sans','Open_Sans',sans-serif] text-[11px] leading-4">
    <TitleBar />
    <TabBar />
    <Ribbon />
    <main className="flex min-h-0 flex-1 flex-col bg-[#6a6a6a]">
      <FormulaBar />
      <DocumentTabs />
      <div className="flex min-h-0 flex-1">
        <Sheet />
        <VerticalScroll />
      </div>
      <SheetBar />
    </main>
    <StatusBar />
  </div>
);

export default App;
